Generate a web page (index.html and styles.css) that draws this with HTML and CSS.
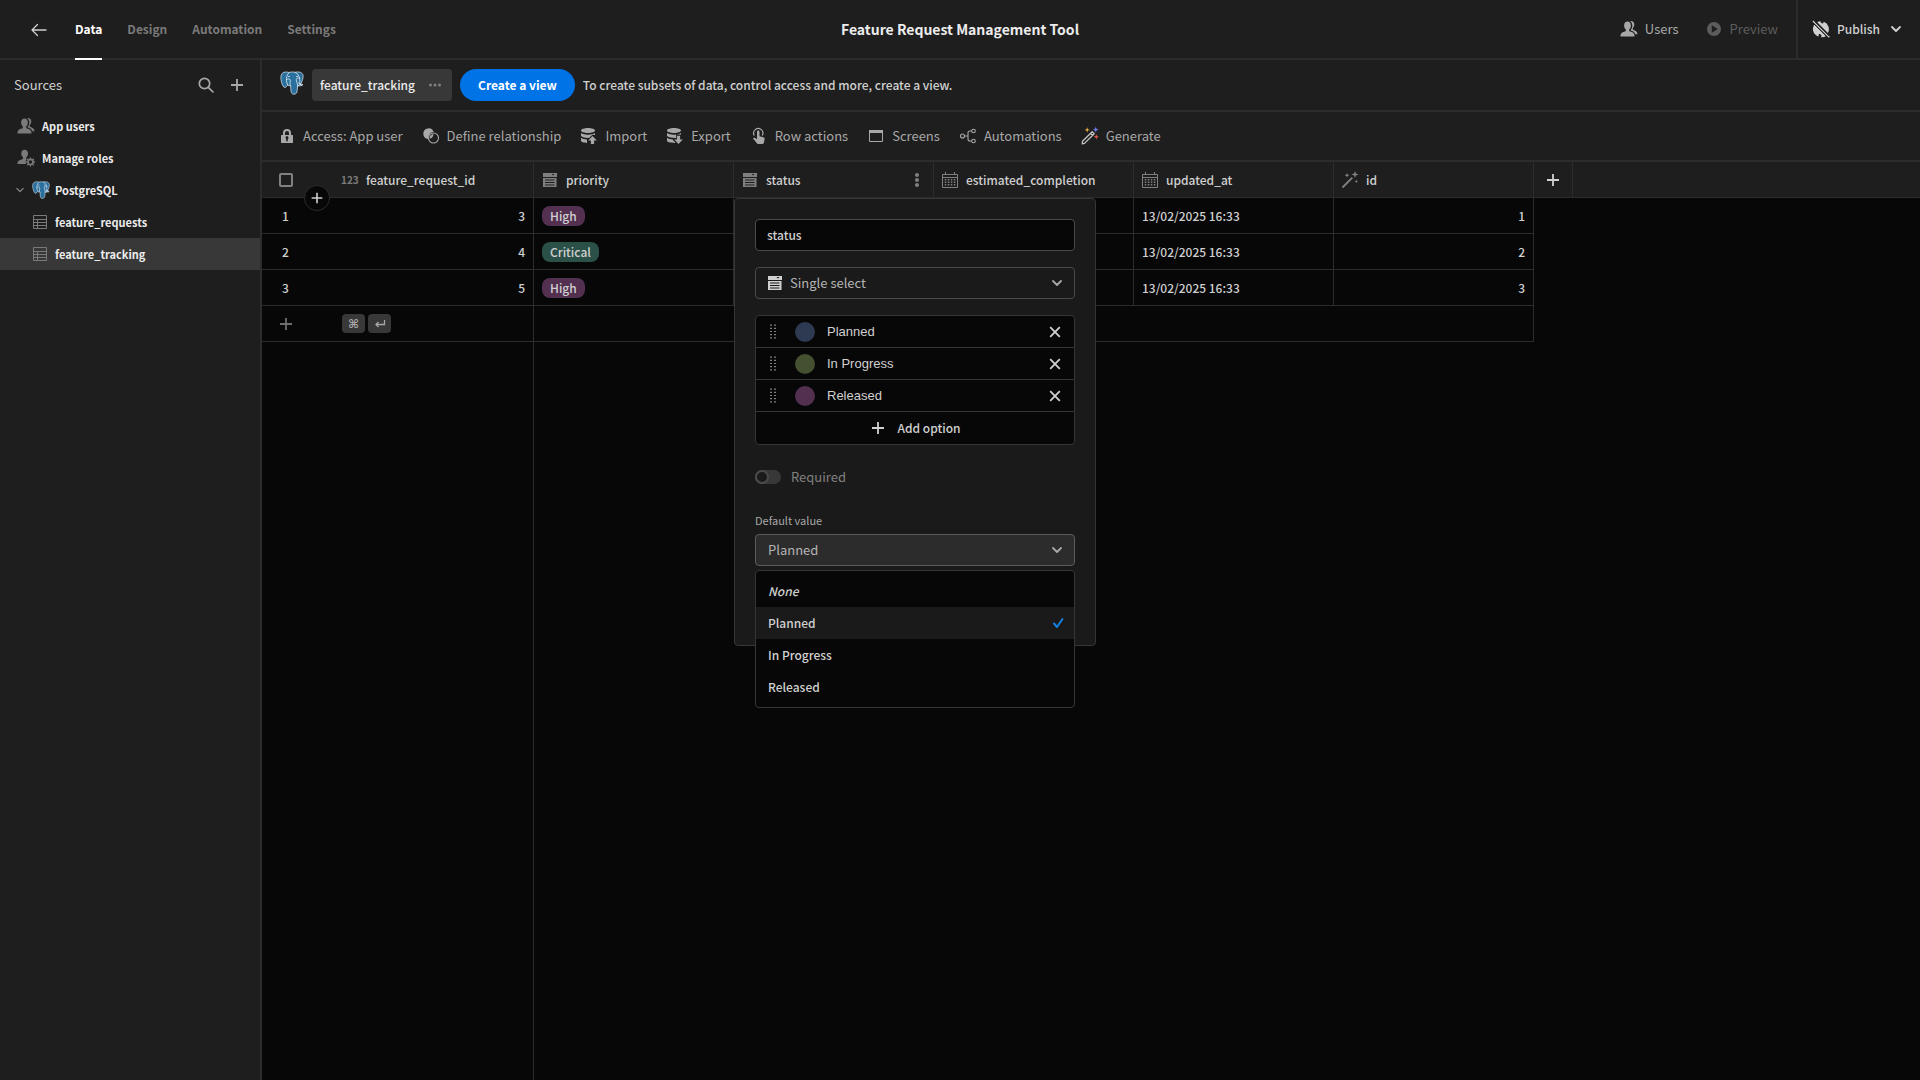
FILE: index.html
```html
<!DOCTYPE html>
<html lang="en">
<head>
<meta charset="utf-8">
<title>Feature Request Management Tool</title>
<link rel="stylesheet" href="styles.css">
</head>
<body>
<svg class="sprite" aria-hidden="true">
  <symbol id="i-users" viewBox="0 0 18 18"><path fill="currentColor" d="M7.500 1.600c2 0 3.400 1.600 3.400 3.800 0 1.600-.7 3.100-1.700 3.900v1.200c0 .6.3.8.9 1 2.300.8 4.400 1.500 4.400 4v.9H.5v-.9c0-2.500 2.100-3.200 4.400-4 .6-.2.9-.4.9-1V9.300C4.800 8.500 4.100 7 4.100 5.400c0-2.200 1.400-3.800 3.400-3.800z"/><path fill="currentColor" d="M10.200 1.200c2.300-.5 4.100 1.100 4.100 3.400 0 1.500-.6 2.700-1.500 3.500v1.400c2.600 1.300 4.700 2.100 4.700 4.700h-2.100c-.6-2.100-2.500-3.100-4.600-3.800v-.8c1-1 1.500-2.500 1.500-4.200 0-1.800-.8-3.300-2.100-4.200z"/></symbol>
  <symbol id="i-roles" viewBox="0 0 18 18"><path fill="currentColor" d="M7.600.8c2 0 3.400 1.500 3.400 3.700 0 1.600-.7 3-1.700 3.800-.2.900-.2 1.600.4 2l-1 1.500.2 3.300H.5v-1c0-2.300 2.100-3 4.300-3.700.8-.3 1.200-.5 1.200-1.200V8.300c-1-.8-1.700-2.200-1.700-3.800C4.300 2.300 5.600.8 7.600.8z"/><circle cx="13.500" cy="13" r="2.500" fill="none" stroke="currentColor" stroke-width="1.500"/><path stroke="currentColor" stroke-width="1.400" d="M13.500 8.500v2M13.500 15.500v2M9 13h2M16 13h2M10.300 9.800l1.400 1.400M15.300 14.800l1.400 1.400M16.700 9.800l-1.400 1.400M11.700 14.800l-1.400 1.400"/></symbol>
  <symbol id="i-pg" viewBox="0 0 24 24"><path fill="#2b6f9d" stroke="#e4eef5" stroke-width=".7" stroke-linejoin="round" d="M9 1.500C6.600.6 3.600.8 2 2.600.4 4.500.7 8 1.600 11.500c.7 2.600 1.900 5 3.300 5 1 0 1.900-1.400 2.800-2.400.9.600 2 .8 3 .7.100 1.300 0 3.200.3 5.300.3 1.900 1 3.200 2.800 3.100 2.400 0 3.200-1.500 3.400-3.800.1-1.700.2-3.200.4-4.500 2.300.3 4.400-.2 5.400-1.500-.9.100-1.700 0-2.400-.3 1.500-2.500 2.800-6 2.500-8.700C22.700 1.600 19.400.3 15.200 1.300 13.200.8 11 .9 9 1.500z"/><g fill="none" stroke="#e4eef5" stroke-width=".8" stroke-linecap="round"><path d="M9 1.600C6.700 3.700 6.300 7 6.500 9.500c.1 1.800.6 3.300 1.200 4.500M6.500 8.500C8 7.500 10 7.600 10.200 9c.2 1.600-.3 3-.2 4.600.1.700.4 1 .7 1.200M15.200 1.400c2.500 1.200 4 3.500 4.500 6.100-1.500-.9-3.300-.6-3.400 1-.1 2 1 2.800 1.300 5.700M19.700 7.500c.2 2-.3 3.700.6 5.500"/><path d="M8.500 5.500h1M16.500 5.500h1M18.500 12l3.500 2.500M17.500 15l2.500-1.500"/></g></symbol>
  <symbol id="i-table" viewBox="0 0 18 18"><path fill="none" stroke="currentColor" d="M2.500 2.500h13v13h-13zM2.500 6.500h13M2.500 9.500h13M2.500 12.500h13M6.500 6.500v9"/></symbol>
  <symbol id="i-search" viewBox="0 0 18 18"><g fill="none" stroke="currentColor" stroke-width="1.700"><circle cx="7.500" cy="7.500" r="5.200"/><path d="M11.300 11.300l5.200 5.200"/></g></symbol>
  <symbol id="i-plus" viewBox="0 0 18 18"><path fill="none" stroke="currentColor" stroke-width="1.800" d="M9 3v12M3 9h12"/></symbol>
  <symbol id="i-cross" viewBox="0 0 18 18"><path fill="none" stroke="currentColor" stroke-width="1.800" d="M4.200 4.200l9.600 9.600M13.800 4.200l-9.600 9.600"/></symbol>
  <symbol id="i-chevron" viewBox="0 0 18 18"><path fill="none" stroke="currentColor" stroke-width="1.800" stroke-linecap="round" stroke-linejoin="round" d="M5 7l4 4 4-4"/></symbol>
  <symbol id="i-back" viewBox="0 0 18 18"><path fill="none" stroke="currentColor" stroke-width="1.300" stroke-linecap="round" stroke-linejoin="round" d="M16 9H2M7.500 3.500L2 9l5.500 5.500"/></symbol>
  <symbol id="i-play" viewBox="0 0 18 18"><path fill="currentColor" fill-rule="evenodd" d="M9 2a7 7 0 100 14A7 7 0 009 2zM6.800 5.300L12.800 9l-6 3.700z"/></symbol>
  <symbol id="i-globe-off" viewBox="0 0 18 18"><path fill="currentColor" d="M5.200 2.200A8 8 0 018.500 1.300l.6 1.700 1.900.6.800-1.900A8 8 0 0115.900 13zM2.500 4.300L14.200 15.900a8 8 0 01-5 1.400l.3-2.500-2.600-1.100-.5 2.900A8 8 0 012.500 4.300z"/><path stroke="currentColor" stroke-width="1.400" d="M1 .9l16.300 16.300"/><path stroke="#1e1e1e" d="M2.800 1.500l14.500 14.500M1.200 3.100l14 14"/></symbol>
  <symbol id="i-lock" viewBox="0 0 18 18"><path fill="currentColor" fill-rule="evenodd" d="M3.500 8H5V6a4 4 0 018 0v2h1.500c.3 0 .5.200.5.500v7c0 .3-.2.500-.5.500h-11c-.3 0-.5-.2-.5-.5v-7c0-.3.200-.5.500-.5zM7 8h4V6a2 2 0 00-4 0zm1.200 3.900v2.300h1.600v-2.300a1.500 1.500 0 10-1.600 0z"/></symbol>
  <symbol id="i-relation" viewBox="0 0 18 18"><path fill="currentColor" d="M11.700 5.100A5.300 5.300 0 106 11.900a5.900 5.900 0 015.700-6.800z"/><circle cx="11.500" cy="11" r="5" fill="none" stroke="currentColor" stroke-width="1.100"/><path fill="currentColor" d="M7.500 11.500c.1-2.600 1.600-4.200 4-4.600-.1 2.700-1.500 4.300-4 4.600z"/></symbol>
  <symbol id="i-import" viewBox="0 0 18 18"><path fill="currentColor" d="M1 3.500C1 2 4.200 1 8 1s7 1 7 2.500S11.800 6 8 6 1 5 1 3.500zM1 6c1.500 1.300 4.200 1.700 7 1.700S13.500 7.300 15 6v2l-2.500-.2L9 10.900c-3.800.1-6.800-.6-8-1.900zM1 10.800c1.500 1.100 3.500 1.500 6 1.600v3.500c-3.300-.1-6-.9-6-2.400zM12.500 9l4.300 4.500h-2.700V17h-3.200v-3.500H8.200z"/></symbol>
  <symbol id="i-export" viewBox="0 0 18 18"><path fill="currentColor" d="M1 3.500C1 2 4.200 1 8 1s7 1 7 2.500S11.800 6 8 6 1 5 1 3.500zM1 6c1.500 1.300 4.200 1.700 7 1.700S13.500 7.300 15 6v1.600h-4.900v3.300c-3.900.1-7.900-.6-9.100-1.900zM1 10.800c1.500 1.100 3 1.400 5.400 1.500l3.200 3.600c-5 .1-8.600-.8-8.600-2.400zM12.500 17l4.300-4.500h-2.700V8.700h-3.200v3.800H8.200z"/></symbol>
  <symbol id="i-tap" viewBox="0 0 18 18"><path fill="none" stroke="currentColor" stroke-width="1.200" d="M4.300 8.500a4.600 4.600 0 117.900 0"/><path fill="currentColor" d="M7 4.800c0-1.700 2.500-1.700 2.500 0v4.500l3.800.9c.9.200 1.400.8 1.300 1.700l-.5 3.200c-.2 1.300-.7 1.900-1.800 1.900H8.500c-.9 0-1.300-.3-1.800-1L3 11.500c.8-1.300 2.600-.8 4 1z"/></symbol>
  <symbol id="i-window" viewBox="0 0 18 18"><path fill="none" stroke="currentColor" d="M2.500 3.500h13v11h-13z"/><path fill="currentColor" d="M2 3h14v3H2z"/></symbol>
  <symbol id="i-flow" viewBox="0 0 18 18"><g fill="none" stroke="currentColor" stroke-width="1.100"><circle cx="3.500" cy="9" r="2"/><circle cx="14.500" cy="4" r="1.800"/><circle cx="14.500" cy="14" r="1.800"/><path d="M5.500 9H9M12.700 4H11Q9 4 9 6v6q0 2 2 2h1.700"/></g></symbol>
  <symbol id="i-wand-color" viewBox="0 0 18 18"><path fill="none" stroke="#c4c4c4" stroke-width="1.300" stroke-linejoin="round" d="M1.500 14.300L11.200 4.700l2 2L3.500 16.400 1.300 16.900zM9.500 6.400l2 2"/><path fill="#e8b04a" d="M6.200.3l.7 1.900 1.900.7-1.900.7-.7 1.900-.7-1.900-1.900-.7 1.900-.7z"/><path fill="#6f7be6" d="M14.700-.2l.8 2 2 .8-2 .8-.8 2-.8-2-2-.8 2-.8z"/><path fill="#e2584c" d="M15.300 7.200l.7 1.900 1.900.7-1.900.7-.7 1.900-.7-1.900-1.900-.7 1.900-.7z"/></symbol>
  <symbol id="i-wand" viewBox="0 0 18 18"><path stroke="currentColor" stroke-width="1.900" d="M1.500 16.500l9.800-9.800"/><path fill="currentColor" d="M6 2l.7 1.600 1.600.7-1.600.7L6 6.600 5.300 5l-1.600-.7 1.600-.7zM14 0l.9 2.600 2.600.9-2.600.9L14 7l-.9-2.600-2.600-.9 2.600-.9zM15.300 8.500l.5 1.400 1.400.5-1.400.5-.5 1.400-.5-1.400-1.400-.5 1.400-.5z"/></symbol>
  <symbol id="i-select" viewBox="0 0 18 18"><path fill="currentColor" fill-rule="evenodd" d="M2 2h14v4H2zm8.500 1l1.500 1.500L13.500 3zM2 7h13.500v9H2zm2 1.500v1h9.500v-1zm0 2.500v1h9.500v-1zm0 2.500v1h9.500v-1z"/></symbol>
  <symbol id="i-calendar" viewBox="0 0 18 18"><path fill="none" stroke="currentColor" d="M1.500 3.500h15v13h-15zM4.500 1v3M13.500 1v3M1.500 6.500h15"/><path stroke="currentColor" stroke-width="1.500" stroke-dasharray="1.500 1.500" d="M3.800 8.800h10.500M3.800 11.300h10.500M3.800 13.800h10.500"/></symbol>
  <symbol id="i-check" viewBox="0 0 18 18"><path fill="none" stroke="currentColor" stroke-width="2" stroke-linecap="round" stroke-linejoin="round" d="M5 9.500l3 3.500L13.500 5"/></symbol>
  <symbol id="i-grip" viewBox="0 0 18 18"><path stroke="currentColor" stroke-width="1.200" stroke-dasharray="1.200 2" d="M7 1.500v15.500M11 1.500v15.500"/></symbol>
  <symbol id="i-dots" viewBox="0 0 18 18"><g fill="currentColor"><circle cx="4.500" cy="9" r="1.500"/><circle cx="9" cy="9" r="1.500"/><circle cx="13.500" cy="9" r="1.500"/></g></symbol>
  <symbol id="i-more" viewBox="0 0 18 18"><g fill="currentColor"><circle cx="9" cy="4" r="2"/><circle cx="9" cy="9" r="2"/><circle cx="9" cy="14" r="2"/></g></symbol>
</svg>

<header class="topbar">
  <nav class="tabs">
    <a class="back" href="#" aria-label="Back"><svg class="icon"><use href="#i-back"/></svg></a>
    <a class="tab active" href="#">Data</a>
    <a class="tab" href="#">Design</a>
    <a class="tab" href="#">Automation</a>
    <a class="tab" href="#">Settings</a>
  </nav>
  <h1 class="app-title">Feature Request Management Tool</h1>
  <div class="top-actions">
    <button class="top-btn"><svg class="icon"><use href="#i-users"/></svg>Users</button>
    <button class="top-btn muted"><svg class="icon"><use href="#i-play"/></svg>Preview</button>
    <button class="top-btn publish"><svg class="icon"><use href="#i-globe-off"/></svg>Publish<svg class="icon"><use href="#i-chevron"/></svg></button>
  </div>
</header>

<div class="workspace">
  <aside class="sidebar">
    <div class="side-head">
      <h2 class="side-title">Sources</h2>
      <button class="icon-btn" aria-label="Search"><svg class="icon"><use href="#i-search"/></svg></button>
      <button class="icon-btn" aria-label="Add source"><svg class="icon"><use href="#i-plus"/></svg></button>
    </div>
    <nav class="sources">
      <a class="source" href="#"><svg class="icon"><use href="#i-users"/></svg>App users</a>
      <a class="source" href="#"><svg class="icon"><use href="#i-roles"/></svg>Manage roles</a>
      <a class="source parent" href="#"><svg class="icon small"><use href="#i-chevron"/></svg><svg class="icon"><use href="#i-pg"/></svg>PostgreSQL</a>
      <a class="source child" href="#"><svg class="icon"><use href="#i-table"/></svg>feature_requests</a>
      <a class="source child selected" href="#"><svg class="icon"><use href="#i-table"/></svg>feature_tracking</a>
    </nav>
  </aside>

  <main class="content">
    <div class="viewbar">
      <svg class="pg-logo"><use href="#i-pg"/></svg>
      <button class="view-chip">feature_tracking<svg class="icon"><use href="#i-dots"/></svg></button>
      <button class="cta">Create a view</button>
      <p class="hint">To create subsets of data, control access and more, create a view.</p>
    </div>
    <div class="toolbar">
      <button class="tool"><svg class="icon"><use href="#i-lock"/></svg>Access: App user</button>
      <button class="tool"><svg class="icon"><use href="#i-relation"/></svg>Define relationship</button>
      <button class="tool"><svg class="icon"><use href="#i-import"/></svg>Import</button>
      <button class="tool"><svg class="icon"><use href="#i-export"/></svg>Export</button>
      <button class="tool"><svg class="icon"><use href="#i-tap"/></svg>Row actions</button>
      <button class="tool"><svg class="icon"><use href="#i-window"/></svg>Screens</button>
      <button class="tool"><svg class="icon"><use href="#i-flow"/></svg>Automations</button>
      <button class="tool"><svg class="icon"><use href="#i-wand-color"/></svg>Generate</button>
    </div>

    <table class="grid">
      <colgroup><col class="c-gutter"><col class="c-data"><col class="c-data"><col class="c-data"><col class="c-data"><col class="c-data"><col class="c-data"><col class="c-add"><col></colgroup>
      <thead>
        <tr>
          <th class="gutter">
            <input class="row-check" type="checkbox" aria-label="Select all rows">
            <button class="insert-row" aria-label="Insert row"><svg class="icon"><use href="#i-plus"/></svg></button>
          </th>
          <th class="line"><div class="col-head"><span class="num-type">123</span>feature_request_id</div></th>
          <th class="line"><div class="col-head"><svg class="icon"><use href="#i-select"/></svg>priority</div></th>
          <th class="line anchor">
            <div class="col-head"><svg class="icon"><use href="#i-select"/></svg>status<button class="more" aria-label="Column options"><svg class="icon"><use href="#i-more"/></svg></button></div>
            <form class="popover">
              <input class="field" type="text" value="status" aria-label="Column name">
              <div class="select-wrap with-icon">
                <svg class="icon lead"><use href="#i-select"/></svg>
                <select class="field picker" aria-label="Type"><option>Single select</option></select>
                <svg class="icon caret"><use href="#i-chevron"/></svg>
              </div>
              <div class="options">
                <div class="option"><svg class="icon"><use href="#i-grip"/></svg><span class="swatch blue"></span><input class="option-name" type="text" value="Planned" aria-label="Option 1"><button type="button" class="remove" aria-label="Remove Planned"><svg class="icon"><use href="#i-cross"/></svg></button></div>
                <div class="option"><svg class="icon"><use href="#i-grip"/></svg><span class="swatch green"></span><input class="option-name" type="text" value="In Progress" aria-label="Option 2"><button type="button" class="remove" aria-label="Remove In Progress"><svg class="icon"><use href="#i-cross"/></svg></button></div>
                <div class="option"><svg class="icon"><use href="#i-grip"/></svg><span class="swatch purple"></span><input class="option-name" type="text" value="Released" aria-label="Option 3"><button type="button" class="remove" aria-label="Remove Released"><svg class="icon"><use href="#i-cross"/></svg></button></div>
                <button type="button" class="add-option"><svg class="icon"><use href="#i-plus"/></svg>Add option</button>
              </div>
              <label class="toggle"><input class="switch" type="checkbox">Required</label>
              <label class="field-label" for="default-value">Default value</label>
              <div class="select-wrap">
                <select class="field picker open" id="default-value"><option>Planned</option><option>In Progress</option><option>Released</option></select>
                <svg class="icon caret"><use href="#i-chevron"/></svg>
                <ul class="menu" role="listbox" aria-label="Default value">
                  <li class="menu-item none" role="option">None</li>
                  <li class="menu-item chosen" role="option" aria-selected="true">Planned<svg class="icon tick"><use href="#i-check"/></svg></li>
                  <li class="menu-item" role="option">In Progress</li>
                  <li class="menu-item" role="option">Released</li>
                </ul>
              </div>
            </form>
          </th>
          <th class="line"><div class="col-head"><svg class="icon"><use href="#i-calendar"/></svg>estimated_completion</div></th>
          <th class="line"><div class="col-head"><svg class="icon"><use href="#i-calendar"/></svg>updated_at</div></th>
          <th class="line"><div class="col-head"><svg class="icon"><use href="#i-wand"/></svg>id</div></th>
          <th class="line"><button class="add-col" aria-label="Add column"><svg class="icon"><use href="#i-plus"/></svg></button></th>
          <th></th>
        </tr>
      </thead>
      <tbody>
        <tr><td class="gutter">1</td><td class="line num">3</td><td class="line"><span class="tag purple">High</span></td><td class="line"></td><td class="line"></td><td class="line">13/02/2025 16:33</td><td class="line num">1</td></tr>
        <tr><td class="gutter">2</td><td class="line num">4</td><td class="line"><span class="tag teal">Critical</span></td><td class="line"></td><td class="line"></td><td class="line">13/02/2025 16:33</td><td class="line num">2</td></tr>
        <tr><td class="gutter">3</td><td class="line num">5</td><td class="line"><span class="tag purple">High</span></td><td class="line"></td><td class="line"></td><td class="line">13/02/2025 16:33</td><td class="line num">3</td></tr>
        <tr><td class="gutter"><button class="new-row" aria-label="Add row"><svg class="icon"><use href="#i-plus"/></svg></button></td><td class="line"><div class="keys"><kbd class="key">⌘</kbd><kbd class="key"><svg class="enter" viewBox="0 0 12 10"><path fill="none" stroke="currentColor" stroke-width="1.300" d="M10.500 1v4.500H2M4.500 3L2 5.500 4.500 8"/></svg></kbd></div></td><td class="line" colspan="5"></td></tr>
      </tbody>
    </table>
    <div class="grid-rest"><div class="sticky-edge"></div></div>
  </main>
</div>
</body>
</html>
```
FILE: styles.css
```css
:root {
  --bar: #1e1e1e;
  --line: #2c2c2c;
  --canvas: #070707;
  --text: #d0d0d0;
  --dim: #a8a8a8;
}
*, *::before { box-sizing: border-box; }
body {
  margin: 0;
  min-height: 100vh;
  display: flex;
  flex-direction: column;
  background: var(--canvas);
  color: var(--text);
  font: 500 12px/18px "Noto Sans CJK SC", "Noto Sans CJK JP", sans-serif;
}
button, select, input { font: inherit; color: inherit; margin: 0; }
button { background: none; border: 0; padding: 0; display: flex; align-items: center; white-space: nowrap; }
a { color: inherit; text-decoration: none; }
h1, h2, p, ul { margin: 0; padding: 0; font-size: inherit; }
.sprite { display: none; }
.icon { width: 18px; height: 18px; flex: none; display: block; }
.icon.small { width: 14px; height: 14px; }

.topbar {
  display: grid;
  grid-template-columns: 1fr auto 1fr;
  height: 60px;
  background: var(--bar);
  border-bottom: 2px solid var(--line);
}
.tabs { display: flex; gap: 25px; padding-left: 30px; margin-bottom: -2px; }
.tab { display: flex; align-items: center; color: #7a7a7a; font-weight: 700; border-bottom: 2px solid transparent; }
.tab.active { color: #fff; border-color: #fff; }
.back { display: flex; align-items: center; padding-right: 2px; }
.app-title { align-self: center; font-size: 14px; font-weight: 700; color: #ececec; }
.top-actions { display: flex; justify-content: flex-end; }
.top-btn { gap: 7px; padding: 0 14px; font-size: 13px; font-weight: 400; color: var(--dim); }
.top-btn.muted { color: #5c5c5c; padding: 0 18px 0 12px; }
.top-btn.publish { padding-right: 15px; border-left: 2px solid var(--line); font-size: 12px; font-weight: 500; color: var(--text); }

.workspace { flex: 1; display: flex; }
.sidebar { width: 262px; flex: none; background: var(--bar); border-right: 2px solid var(--line); }
.side-head { display: flex; align-items: center; gap: 13px; height: 50px; padding: 0 14px; }
.side-title { flex: 1; font-size: 13px; font-weight: 400; }
.icon-btn { color: var(--dim); }
.source { display: flex; align-items: center; gap: 7px; height: 32px; padding-left: 17px; font-size: 11px; font-weight: 700; color: #ececec; }
.source .icon { color: #7a7a7a; }
.source.parent { padding-left: 13px; gap: 5px; }
.source.child { padding-left: 31px; gap: 6px; }
.source.selected { background: #383838; }

.content { flex: 1; min-width: 0; display: flex; flex-direction: column; }
.viewbar { display: flex; align-items: center; gap: 8px; height: 52px; padding-left: 18px; background: var(--bar); border-bottom: 2px solid var(--line); }
.pg-logo { width: 24px; height: 24px; margin-bottom: 4px; }
.view-chip { gap: 11px; height: 32px; padding: 0 8px; border-radius: 4px; background: #383838; color: #ececec; }
.view-chip .icon { color: #808080; }
.cta { height: 32px; padding: 0 18px; border-radius: 16px; background: #0073e6; color: #fff; font-weight: 700; }
.toolbar { display: flex; gap: 19px; height: 50px; padding-left: 16px; background: var(--bar); border-bottom: 2px solid var(--line); }
.tool { gap: 7px; font-size: 13px; font-weight: 400; color: var(--dim); }

.grid { width: 100%; table-layout: fixed; border-collapse: separate; border-spacing: 0; }
.c-gutter { width: 72px; }
.c-data { width: 200px; }
.c-add { width: 39px; }
.grid th, .grid td { height: 36px; padding: 0; border-bottom: 1px solid var(--line); font-weight: 500; text-align: left; }
.grid th { background: var(--bar); }
.grid td { padding: 0 8px; }
.grid .line { border-right: 1px solid var(--line); }
.grid .gutter { position: relative; padding: 0 17px; }
.grid td.gutter { padding-left: 20px; }
.grid .num { text-align: right; }
.col-head { display: flex; align-items: center; gap: 7px; padding: 0 7px; }
.col-head .icon { color: #808080; }
.num-type { width: 18px; font-size: 10px; font-weight: 700; color: #7a7a7a; }
.more { margin-left: auto; }
.row-check { appearance: none; display: block; width: 14px; height: 14px; border: 2px solid #808080; border-radius: 2px; }
.insert-row { position: absolute; left: 42px; bottom: -14px; z-index: 1; width: 26px; height: 26px; justify-content: center; border: 1px solid var(--line); border-radius: 50%; background: var(--canvas); }
.insert-row .icon { width: 16px; height: 16px; }
.add-col { width: 100%; justify-content: center; }
.new-row { margin-left: -5px; color: #6e6e6e; }
.tag { display: inline-block; padding: 0 8px; height: 20px; line-height: 20px; border-radius: 8px; }
.purple { background: #532f50; }
.teal { background: #2a5048; }
.keys { display: flex; gap: 3px; }
.key { display: flex; align-items: center; justify-content: center; width: 23px; height: 19px; border-radius: 4px; background: #383838; color: var(--dim); font: 700 12px/18px "DejaVu Sans", sans-serif; }
.enter { width: 12px; height: 10px; }
.grid-rest { flex: 1; display: flex; }
.sticky-edge { width: 272px; border-right: 1px solid var(--line); }

.anchor { position: relative; }
.popover { position: absolute; top: 36px; left: 0; z-index: 2; width: 362px; padding: 20px 20px 79px; display: flex; flex-direction: column; border: 1px solid #363636; border-radius: 4px; background: #1a1a1a; }
.field { display: block; width: 100%; height: 32px; padding: 0 11px 2px; border: 1px solid #4a4a4a; border-radius: 4px; background: var(--canvas); outline: 0; }
.select-wrap { position: relative; }
.select-wrap.with-icon { margin: 16px 0; }
.picker { appearance: none; padding: 0 12px; background: #1a1a1a; font-size: 13px; font-weight: 400; color: #b4b4b4; }
.with-icon .picker { padding-left: 34px; }
.picker.open { background: #2c2c2c; border-color: #5c5c5c; }
.lead { position: absolute; left: 11px; top: 7px; }
.caret { position: absolute; right: 9px; top: 7px; color: var(--dim); }
.options { border: 1px solid #363636; border-radius: 4px; background: var(--canvas); }
.option { display: flex; align-items: center; height: 32px; padding: 0 10px 0 8px; border-bottom: 1px solid #363636; }
.swatch { width: 20px; height: 20px; margin: 0 12px 0 13px; border-radius: 50%; }
.blue { background: #2d3a52; }
.green { background: #445030; }
.option-name { flex: 1; min-width: 0; padding: 0; border: 0; outline: 0; background: none; font: 13px/18px "Liberation Sans", sans-serif; }
.add-option { width: 100%; height: 32px; justify-content: center; gap: 10px; }
.toggle { display: flex; align-items: center; gap: 10px; margin: 23px 0 25px; font-size: 13px; font-weight: 400; color: #808080; }
.switch { appearance: none; width: 26px; height: 14px; border-radius: 7px; background: #383838; }
.switch::before { content: ""; display: block; width: 14px; height: 14px; border: 2px solid #4a4a4a; border-radius: 50%; background: #1a1a1a; }
.field-label { margin-bottom: 5px; font-size: 11px; font-weight: 400; color: var(--dim); }
.menu { position: absolute; top: 36px; left: 0; right: 0; padding: 4px 0; list-style: none; border: 1px solid #363636; border-radius: 4px; background: var(--canvas); }
.menu-item { display: flex; align-items: center; justify-content: space-between; height: 32px; padding: 0 7px 0 12px; }
.none { font-style: italic; }
.chosen { background: #1a1a1a; }
.tick { color: #1481e0; }
```
